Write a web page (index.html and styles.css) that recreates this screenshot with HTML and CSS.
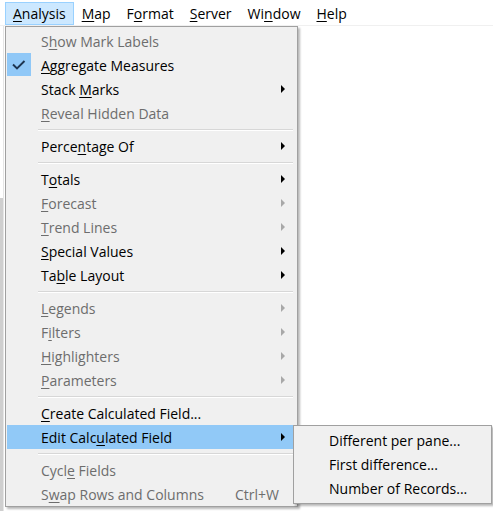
FILE: index.html
```html
<!DOCTYPE html>
<html>
<head>
<meta charset="utf-8">
<link rel="stylesheet" href="styles.css">
</head>
<body>
<div class="app">
  <nav class="menubar">
    <span class="mb-item open"><u>A</u>nalysis</span>
    <span class="mb-item"><u>M</u>ap</span>
    <span class="mb-item">F<u>o</u>rmat</span>
    <span class="mb-item"><u>S</u>erver</span>
    <span class="mb-item">Wi<u>n</u>dow</span>
    <span class="mb-item"><u>H</u>elp</span>
  </nav>
  <div class="workspace">
    <div class="side">
      <div class="side-top"></div>
      <div class="side-bottom"></div>
    </div>
  </div>

  <div class="menu">
    <div class="row disabled"><span class="label">S<u>h</u>ow Mark Labels</span></div>
    <div class="row checked"><span class="check"><svg width="24" height="24" viewBox="0 0 24 24"><path d="M6 11.5 L10 15.5 L17.5 8" fill="none" stroke="#1e3550" stroke-width="1.9"/></svg></span><span class="label"><u>A</u>ggregate Measures</span></div>
    <div class="row"><span class="label">Stack <u>M</u>arks</span><span class="arrow"></span></div>
    <div class="row disabled"><span class="label"><u>R</u>eveal Hidden Data</span></div>
    <div class="sep"></div>
    <div class="row"><span class="label">Perce<u>n</u>tage Of</span><span class="arrow"></span></div>
    <div class="sep"></div>
    <div class="row"><span class="label">T<u>o</u>tals</span><span class="arrow"></span></div>
    <div class="row disabled"><span class="label"><u>F</u>orecast</span><span class="arrow"></span></div>
    <div class="row disabled"><span class="label"><u>T</u>rend Lines</span><span class="arrow"></span></div>
    <div class="row"><span class="label"><u>S</u>pecial Values</span><span class="arrow"></span></div>
    <div class="row"><span class="label">Ta<u>b</u>le Layout</span><span class="arrow"></span></div>
    <div class="sep"></div>
    <div class="row disabled"><span class="label"><u>L</u>egends</span><span class="arrow"></span></div>
    <div class="row disabled"><span class="label">F<u>i</u>lters</span><span class="arrow"></span></div>
    <div class="row disabled"><span class="label"><u>H</u>ighlighters</span><span class="arrow"></span></div>
    <div class="row disabled"><span class="label"><u>P</u>arameters</span><span class="arrow"></span></div>
    <div class="sep"></div>
    <div class="row"><span class="label"><u>C</u>reate Calculated Field...</span></div>
    <div class="row active"><span class="label">Edit Calc<u>u</u>lated Field</span><span class="arrow"></span></div>
    <div class="sep"></div>
    <div class="row disabled"><span class="label">Cycl<u>e</u> Fields</span></div>
    <div class="row disabled"><span class="label">S<u>w</u>ap Rows and Columns</span><span class="shortcut">Ctrl+W</span></div>
  </div>

  <div class="submenu">
    <div class="row"><span class="label">Different per pane...</span></div>
    <div class="row"><span class="label">First difference...</span></div>
    <div class="row"><span class="label">Number of Records...</span></div>
  </div>
</div>
</body>
</html>
```

FILE: styles.css
```css
* { box-sizing: border-box; }
html, body {
  margin: 0;
  padding: 0;
  background: #ffffff;
}
body {
  width: 493px;
  height: 511px;
  overflow: hidden;
  font-family: "Open Sans", "Noto Sans", sans-serif;
  font-size: 14px;
  color: #000;
}
u {
  text-decoration-thickness: 1px;
  text-underline-offset: 2px;
}
.app {
  position: relative;
  width: 493px;
  height: 511px;
  display: flex;
  flex-direction: column;
}
.menubar {
  display: flex;
  height: 26px;
  padding: 2px 0 0 5px;
  border-bottom: 1px solid #f0f0f0;
}
.mb-item {
  display: flex;
  align-items: center;
  height: 23px;
  padding: 0 7px;
  border: 1px solid transparent;
  white-space: nowrap;
}
.mb-item.open {
  background: #cce8ff;
  border-color: #99d1ff;
}
.workspace {
  flex: 1;
  display: flex;
}
.side {
  width: 4px;
  display: flex;
  flex-direction: column;
  border-right: 1px solid #e6e6e6;
}
.side-top { height: 172px; }
.side-bottom { flex: 1; background: #cfcfcf; }

.menu {
  position: absolute;
  left: 5px;
  top: 26px;
  width: 293px;
  background: #f0f0f0;
  border: 1px solid #a0a0a0;
  padding: 2px 4px 0 1px;
  box-shadow: 2px 2px 2px rgba(0, 0, 0, 0.28);
}
.row {
  position: relative;
  display: flex;
  align-items: center;
  height: 24px;
  padding-left: 34px;
  padding-right: 8px;
  white-space: nowrap;
}
.row .label { flex: 1; }
.row.disabled { color: #6d6d6d; }
.row.active { background: #91c9f7; }
.check {
  position: absolute;
  left: 0;
  top: 0;
  width: 24px;
  height: 23px;
  background: #90c8f7;
}
.check svg { display: block; }
.arrow {
  width: 0;
  height: 0;
  border-top: 4px solid transparent;
  border-bottom: 4px solid transparent;
  border-left: 4px solid #000;
}
.row.disabled .arrow { border-left-color: #a8a8a8; }
.shortcut {
  color: #6d6d6d;
  margin-right: 6px;
}
.sep {
  height: 1px;
  margin: 4px 0 4px 31px;
  background: #d7d7d7;
  box-shadow: 0 1px 0 #ffffff;
}
.submenu {
  position: absolute;
  left: 293px;
  top: 425px;
  width: 199px;
  background: #f0f0f0;
  border: 1px solid #a0a0a0;
  padding: 2px 2px 3px 1px;
  box-shadow: 2px 2px 2px rgba(0, 0, 0, 0.28);
}
.submenu .row { padding-left: 34px; }
```
